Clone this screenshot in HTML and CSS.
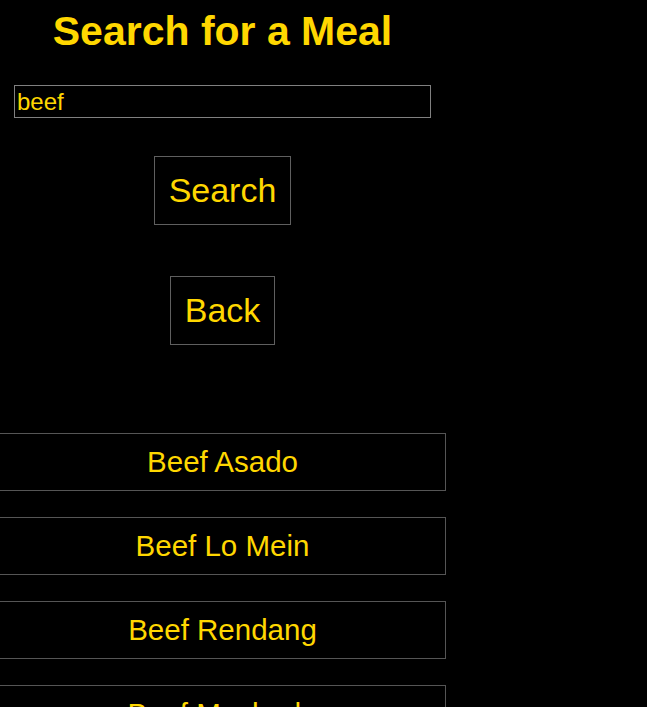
FILE: index.html
```html
<!DOCTYPE html>
<html lang="en">
<head>
<meta charset="utf-8">
<title>Search for a Meal</title>
<link rel="stylesheet" href="styles.css">
</head>
<body>
<main class="page">
  <h1 class="title">Search for a Meal</h1>
  <input class="search-input" type="text" value="beef">
  <button class="btn btn-search" type="button">Search</button>
  <button class="btn btn-back" type="button">Back</button>
  <ul class="results">
    <li class="result">Beef Asado</li>
    <li class="result">Beef Lo Mein</li>
    <li class="result">Beef Rendang</li>
    <li class="result">Beef Mechado</li>
    <li class="result">Beef Brisket Pot Roast</li>
  </ul>
</main>
</body>
</html>
```

FILE: styles.css
```css
html, body {
  margin: 0;
  padding: 0;
  background: #000;
}

body {
  font-family: "Liberation Sans", Arial, sans-serif;
  color: #ffd700;
  overflow: hidden;
}

.page {
  width: 445px;
  display: flex;
  flex-direction: column;
  align-items: center;
}

.title {
  margin: 8px 0 0;
  font-size: 41px;
  line-height: 47px;
  font-weight: bold;
  color: #ffd700;
}

.search-input {
  box-sizing: border-box;
  margin-top: 30px;
  width: 417px;
  height: 33px;
  padding: 0 2px;
  border: 1px solid #808080;
  background: #000;
  color: #ffd700;
  font-family: "Liberation Sans", Arial, sans-serif;
  font-size: 24px;
  outline: none;
}

.btn {
  box-sizing: border-box;
  padding: 14px 13.5px;
  border: 1px solid #5f5f5f;
  background: #000;
  color: #ffd700;
  font-family: "Liberation Sans", Arial, sans-serif;
  font-size: 34px;
  line-height: 39px;
  cursor: pointer;
}

.btn-search {
  margin-top: 38px;
}

.btn-back {
  margin-top: 51px;
}

.results {
  list-style: none;
  margin: 88px 0 0;
  padding: 0;
  width: 447px;
  display: flex;
  flex-direction: column;
  gap: 26px;
}

.result {
  box-sizing: border-box;
  height: 58px;
  padding: 11px 0;
  border: 1px solid #555;
  text-align: center;
  font-size: 29.5px;
  line-height: 34px;
}
```
